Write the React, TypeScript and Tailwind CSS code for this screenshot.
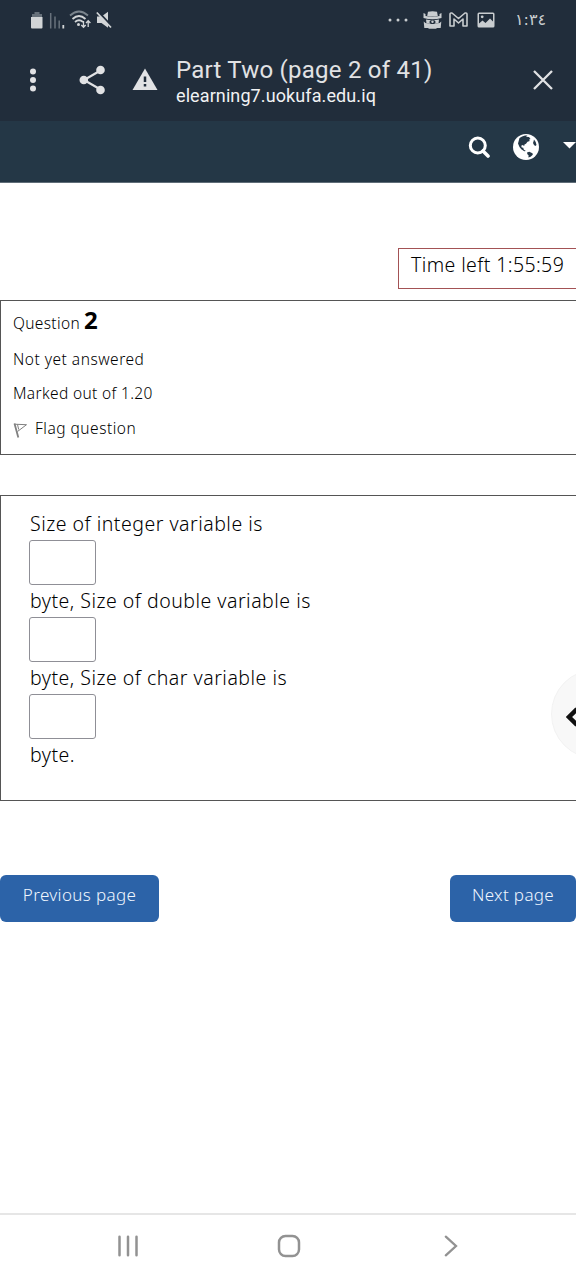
import React from "react";

function StatusBar() {
  return (
    <div className="flex h-[39px] items-center pl-[31px] text-[#c9cdd0]">
      <svg width="12" height="18" viewBox="0 0 12 18" className="mt-px">
        <path d="M3.500 1h5v2H11v4H1V3h2.500z" fill="#66707a" />
        <path d="M0 6h11.500v10.500q0 1-1 1H1q-1 0-1-1z" fill="#d2d5d7" />
      </svg>
      <svg width="16" height="18" viewBox="0 0 16 18" className="ml-[6px] mt-px">
        <path d="M1.700 2v15.500M6 5.500v12M10.200 9.500v8" stroke="#68727c" strokeWidth="1.500" />
        <path d="M14.300 14v3.500" stroke="#d2d5d7" strokeWidth="1.800" />
      </svg>
      <svg width="23" height="19" viewBox="0 0 23 19" className="ml-[4px]" fill="none">
        <path d="M1 5.500Q10 -2.500 19 5.500" stroke="#7a848c" strokeWidth="1.800" />
        <path d="M3.500 9Q10 3 16.500 9M6 12Q10 8.500 14 12" stroke="#d2d5d7" strokeWidth="1.800" />
        <circle cx="9.500" cy="14.500" r="1.500" fill="#d2d5d7" />
        <path d="M14.500 11v6M12.300 15l2.200 2.300 2.200-2.300M19.200 17v-6M17 13l2.200-2.300L21.400 13" stroke="#d2d5d7" strokeWidth="1.300" />
      </svg>
      <svg width="17" height="18" viewBox="0 0 17 18" className="ml-[4px]">
        <path d="M1 5.500h4.500L12 .8v16L5.500 12H1z" fill="#d2d5d7" />
        <path d="M2 .5L16.500 16" stroke="#212d3b" strokeWidth="2" />
        <path d="M.8 1.500L15 16.500" stroke="#d2d5d7" strokeWidth="1.700" />
      </svg>
      <svg width="20" height="4" viewBox="0 0 20 4" className="ml-[275px]" fill="#c9cdd0">
        <circle cx="2" cy="2" r="1.500" />
        <circle cx="10" cy="2" r="1.500" />
        <circle cx="18" cy="2" r="1.500" />
      </svg>
      <svg width="19" height="18" viewBox="0 0 19 18" className="ml-[15px]" fill="#c9cdd0">
        <path d="M5 .8Q9.500-.5 14 .8l.8 4.200Q9.500 6 4.200 5z" />
        <path d="M.5 2v5q9 2.500 18 0V2l-2 1v2q-7 1.500-14 0V3z" />
        <path d="M3 8.500q6.500 1.500 13 0l-.5 4h-12z" />
        <path d="M.7 10.500Q2 12.500 5 12.500h9q3 0 4.300-2l-.6 6.500H14l-1 .7H6L5 17H1.300z" />
        <ellipse cx="9.500" cy="11" rx="3" ry="2" fill="#212d3b" />
        <circle cx="9.500" cy="10.800" r="1.200" />
      </svg>
      <svg width="19" height="15" viewBox="0 0 19 15" className="ml-[7px]" fill="none" stroke="#c9cdd0" strokeWidth="1.600" strokeLinejoin="round">
        <path d="M1 14V2.500Q1 .7 3 1l6.500 5.500L16 1q2-.3 2 1.500V14h-4V7l-4.500 4L5 7v7z" />
      </svg>
      <svg width="18" height="16" viewBox="0 0 18 16" className="ml-[9px]">
        <path fillRule="evenodd" fill="#c9cdd0" d="M2 .5h14q1.500 0 1.500 1.500v12q0 1.500-1.500 1.500H2Q.5 15.500.5 14V2Q.5.500 2 .5zM2 2v9.500l3.500-3 3 2.500L13 6.500l3 3V2z" />
        <circle cx="5.200" cy="4.800" r="1.400" fill="#c9cdd0" />
      </svg>
      <span className="ml-[20px] whitespace-nowrap font-['DejaVu_Sans',sans-serif] text-[16px] leading-[20px] tracking-[-0.200px]">١:٣٤</span>
    </div>
  );
}

function TitleBar() {
  return (
    <div className="flex h-[82px] items-center pl-[29px] text-[#e1e2e4]">
      <svg width="8" height="24" viewBox="0 0 8 24" fill="currentColor">
        <circle cx="4" cy="3.500" r="3" />
        <circle cx="4" cy="12" r="3" />
        <circle cx="4" cy="20.500" r="3" />
      </svg>
      <svg width="28" height="30" viewBox="0 0 28 30" className="ml-[41px]" fill="currentColor">
        <path d="M22.500 5.500L6 15l16.500 9.500" fill="none" stroke="currentColor" strokeWidth="2.200" />
        <circle cx="22.500" cy="5" r="4.300" />
        <circle cx="5.800" cy="15" r="4.300" />
        <circle cx="22.500" cy="25" r="4.300" />
      </svg>
      <svg width="26" height="22" viewBox="0 0 26 22" className="ml-[26px] -mt-[3px]">
        <path d="M13 .5L25.500 22H.5z" fill="currentColor" />
        <path d="M13 8.500v5.500M13 16v2.500" stroke="#212d3b" strokeWidth="2.500" />
      </svg>
      <div className="ml-[18px] mt-[4px] w-[350px] whitespace-nowrap font-[Roboto,sans-serif]">
        <div className="text-[24px] leading-[28px] tracking-[0.24px]">Part Two (page 2 of 41)</div>
        <div className="text-[18px] leading-[24px] tracking-[0.1px] text-[#f1f2f3]">elearning7.uokufa.edu.iq</div>
      </div>
      <svg width="20" height="20" viewBox="0 0 20 20" className="ml-[7px]">
        <path d="M1 1l18 18M19 1L1 19" stroke="currentColor" strokeWidth="2.300" />
      </svg>
    </div>
  );
}

function SiteBar() {
  return (
    <div className="flex h-[62px] items-start border-b border-[#5f6d78] bg-[#243746] pl-[468px] text-white">
      <svg width="22" height="22" viewBox="0 0 22 22" className="mt-[15px] shrink-0" fill="none" stroke="currentColor">
        <circle cx="9.800" cy="9.500" r="7.500" strokeWidth="3" />
        <path d="M15 15l5 5" strokeWidth="3.600" strokeLinecap="round" />
      </svg>
      <svg width="26" height="26" viewBox="0 0 26 26" className="ml-[23px] mt-[13px] shrink-0">
        <circle cx="13" cy="13" r="13" fill="currentColor" />
        <path fill="#243746" d="M6.500 4Q9 2 12 1.500h2.500l-1.500 1.300 3 .2 1.500 2-1.500.7.800 1.300-2.300.8-1.500 2-1.500.7-.3 1.500-1.500-1-1.500.8.500 1.700 1.500.2.700 2 2 1.300-1.600.2-3-2L6.500 13 5 9.500z" />
        <path fill="#243746" d="M21 5.500l1.700 2.500.8 3-1.200 1-1.300-1-1-2 .5-1.500zM14 18.500l2.300-.7 3.200 1.400.3 1.600-2.200 1.900-2.200.8.200-2.200-1.200-1z" />
      </svg>
      <svg width="13" height="7" viewBox="0 0 13 7" className="ml-[24px] mt-[21px] shrink-0">
        <path d="M0 0h13L6.500 6.500z" fill="currentColor" />
      </svg>
    </div>
  );
}

function QuestionInfo() {
  return (
    <section className="mt-[11px] h-[155px] border-y border-l border-[#555] pl-[12px] text-[15.500px] tracking-[0.35px]">
      <div className="flex h-[41px] items-baseline gap-[4px] whitespace-nowrap leading-[38px]">
        <span>Question</span>
        <strong className="text-[24px] font-bold tracking-normal text-black">2</strong>
      </div>
      <div className="h-[35px] leading-[35px] tracking-[0.500px]">Not yet answered</div>
      <div className="h-[34px] leading-[33px]">Marked out of 1.20</div>
      <div className="flex h-[36px] items-center leading-[36px]">
        <svg width="15" height="17" viewBox="0 0 15 17" className="mt-[3px]" fill="none" stroke="#808080">
          <path d="M1.500 1.500l3.800 14" strokeWidth="1.800" />
          <path d="M1 2.200l12.500.5L4.500 9.500M4.500 2.500l1.200 5" strokeWidth="1" />
        </svg>
        <span className="-mt-[2px] ml-[7px] tracking-[0.500px]">Flag question</span>
      </div>
    </section>
  );
}

function AnswerBox() {
  return <input aria-label="Answer" className="block h-[45px] w-[67px] rounded-[3px] border border-[#8f8f96] bg-white" />;
}

function QuestionBody() {
  return (
    <section className="relative mt-[40px] h-[306px] border-y border-l border-[#555] pl-[28px] pt-[11px] text-[19.500px] tracking-[0.500px]">
      <div className="h-[33px] pl-px leading-[33px]">Size of integer variable is</div>
      <AnswerBox />
      <div className="h-[32px] pl-px leading-[32px]">byte, Size of double variable is</div>
      <AnswerBox />
      <div className="h-[32px] pl-px leading-[32px]">byte, Size of char variable is</div>
      <AnswerBox />
      <div className="h-[32px] pl-px leading-[32px]">byte.</div>
      <div className="absolute right-0 top-[173px] h-[90px] w-[25px] overflow-hidden">
        <div className="flex h-[90px] w-[90px] items-center rounded-full border border-[#f2f2f2] bg-[#f8f8f8] pl-[14px]">
          <svg width="20" height="20" viewBox="0 0 20 20" className="mt-[5px]">
            <path d="M11 2L3 10l8 8" fill="none" stroke="#111" strokeWidth="4.500" />
          </svg>
        </div>
      </div>
    </section>
  );
}

function NavigationBar() {
  return (
    <nav className="mt-auto flex h-[67px] items-center border-t-2 border-[#e6e6e6] pb-[3px] pl-[117px] text-[#929292]">
      <svg width="22" height="22" viewBox="0 0 22 22" stroke="currentColor" strokeWidth="2.500" strokeLinecap="round">
        <path d="M2.500 1.700v18.600M11 1.700v18.600M19.500 1.700v18.600" />
      </svg>
      <svg width="24" height="24" viewBox="0 0 24 24" className="ml-[138px]" fill="none" stroke="currentColor" strokeWidth="2.500">
        <rect x="2" y="2" width="20" height="20" rx="6.500" />
      </svg>
      <svg width="14" height="22" viewBox="0 0 14 22" className="ml-[143px]" fill="none" stroke="currentColor" strokeWidth="2.300" strokeLinecap="round">
        <path d="M1.800 1.700L12 11 1.800 20.300" />
      </svg>
    </nav>
  );
}

export default function App() {
  return (
    <div className="flex h-[1280px] w-[576px] flex-col overflow-hidden bg-white font-['Noto_Sans',sans-serif] font-[350] text-black">
      <header className="bg-[#212d3b] font-normal">
        <StatusBar />
        <TitleBar />
        <SiteBar />
      </header>
      <div className="ml-[398px] mt-[65px] h-[41px] whitespace-nowrap border-y border-l border-[#a35255] pl-[12px] text-[19.500px] leading-[32px] tracking-[0.4px]">Time left 1:55:59</div>
      <QuestionInfo />
      <QuestionBody />
      <div className="mt-[74px] flex justify-between text-[17px] leading-[38px] tracking-[0.35px] text-[#f0f7ff]">
        <button className="h-[47px] w-[159px] rounded-[6px] bg-[#2c63a8] pb-[8px]">Previous page</button>
        <button className="h-[47px] w-[126px] rounded-[6px] bg-[#2c63a8] pb-[8px]">Next page</button>
      </div>
      <NavigationBar />
    </div>
  );
}
